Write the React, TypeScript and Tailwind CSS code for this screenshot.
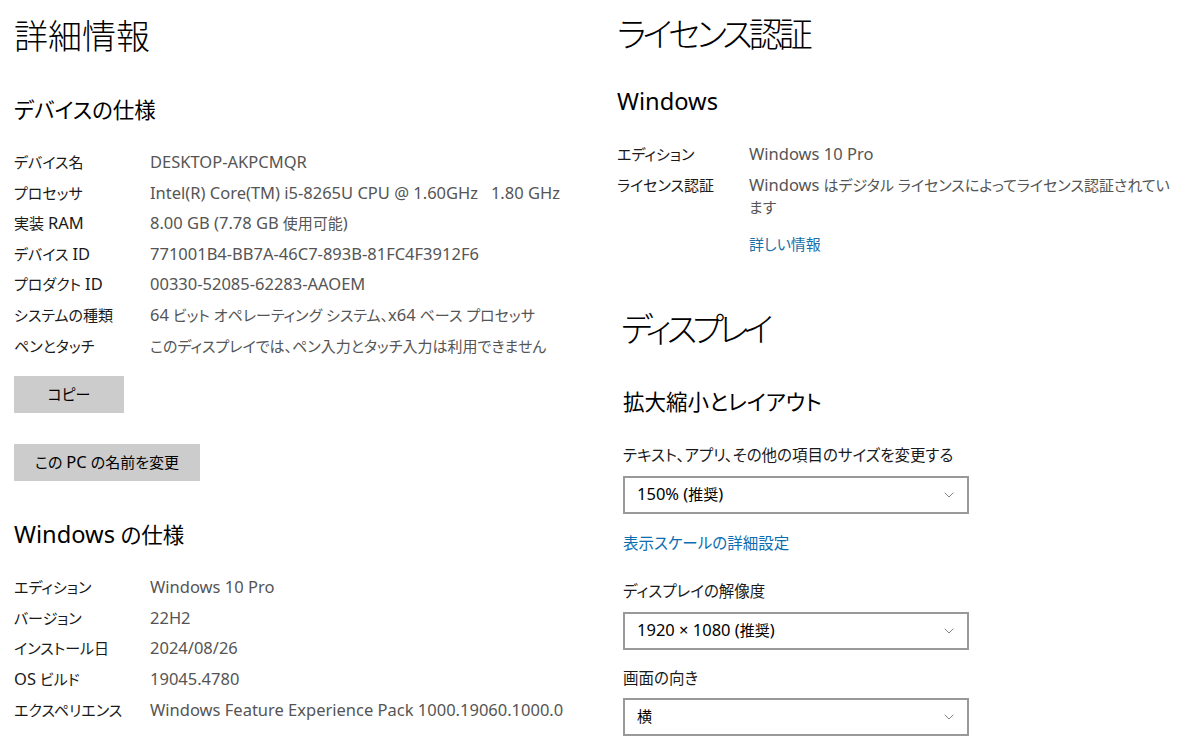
import { ChevronDown } from 'lucide-react';

const font = 'font-["Segoe_UI","Noto_Sans","Noto_Sans_CJK_JP",sans-serif] [font-feature-settings:"palt"]';

const deviceSpecs: [string, string][] = [
  ['デバイス名', 'DESKTOP-AKPCMQR'],
  ['プロセッサ', 'Intel(R) Core(TM) i5-8265U CPU @ 1.60GHz   1.80 GHz'],
  ['実装 RAM', '8.00 GB (7.78 GB 使用可能)'],
  ['デバイス ID', '771001B4-BB7A-46C7-893B-81FC4F3912F6'],
  ['プロダクト ID', '00330-52085-62283-AAOEM'],
  ['システムの種類', '64 ビット オペレーティング システム、x64 ベース プロセッサ'],
  ['ペンとタッチ', 'このディスプレイでは、ペン入力とタッチ入力は利用できません'],
];

const windowsSpecs: [string, string][] = [
  ['エディション', 'Windows 10 Pro'],
  ['バージョン', '22H2'],
  ['インストール日', '2024/08/26'],
  ['OS ビルド', '19045.4780'],
  ['エクスペリエンス', 'Windows Feature Experience Pack 1000.19060.1000.0'],
];

// Latin runs render a bit larger than the CJK text, like Segoe UI next to Yu Gothic UI
function T({ text }: { text: string }) {
  const parts = text.split(/([\x21-\x7e×%](?:[\x20-\x7e×%]*[\x21-\x7e×%])?)/);
  return (
    <>
      {parts.map((p, i) =>
        i % 2 === 1 ? (
          <span key={i} className="text-[1.1em] leading-none">
            {p}
          </span>
        ) : (
          p
        ),
      )}
    </>
  );
}

export default function App() {
  return (
    <div className={`${font} w-[1200px] h-[751px] overflow-hidden bg-white text-[#1a1a1a] grid grid-cols-[603px_1fr] pl-[14px]`}>
      {/* left: about */}
      <div className="flex flex-col">
        <h1 className="mt-[16px] h-[40px] leading-[40px] text-[34px] font-light text-black">詳細情報</h1>
        <h2 className="mt-[40px] h-[28px] leading-[28px] text-[21.5px] text-black">デバイスの仕様</h2>
        <div className="mt-[23px]">
          {deviceSpecs.map(([k, v]) => (
            <Row key={k} label={k} value={v} labelWidth="w-[136px]" />
          ))}
        </div>
        <Button className="mt-[15px] w-[110px]">コピー</Button>
        <Button className="mt-[31px] w-[186px]">
          <T text="この PC の名前を変更" />
        </Button>
        <h2 className="mt-[40px] h-[28px] leading-[28px] text-[21.5px] text-black">
          <T text="Windows の仕様" />
        </h2>
        <div className="mt-[23px]">
          {windowsSpecs.map(([k, v]) => (
            <Row key={k} label={k} value={v} labelWidth="w-[136px]" />
          ))}
        </div>
      </div>

      {/* right: license + display */}
      <div className="flex flex-col">
        <h1 className="mt-[14px] h-[40px] leading-[40px] text-[34px] font-light text-black tracking-[-4px]">ライセンス認証</h1>
        <h2 className="mt-[34px] h-[28px] leading-[28px] text-[21.5px] text-black">
          <T text="Windows" />
        </h2>
        <div className="mt-[23px]">
          <Row label="エディション" value="Windows 10 Pro" labelWidth="w-[132px]" />
          <div className="flex text-[15px] leading-[22px] pt-[4px]">
            <div className="w-[132px] shrink-0">ライセンス認証</div>
            <div className="text-[#555]">
              <T text="Windows はデジタル ライセンスによってライセンス認証されてい" />
              <br />
              ます
            </div>
          </div>
          <div className="flex text-[15px] mt-[15px] leading-[22px]">
            <div className="w-[132px] shrink-0" />
            <a className="text-[#1a6fa8]">詳しい情報</a>
          </div>
        </div>

        <div className="ml-[4px] flex flex-col">
          <h1 className="mt-[54px] h-[40px] leading-[40px] text-[34px] font-light text-black tracking-[-5px]">ディスプレイ</h1>
          <h2 className="mt-[39px] ml-[2px] h-[28px] leading-[28px] text-[21.5px] text-black">拡大縮小とレイアウト</h2>
          <div className="ml-[2px] flex flex-col">
            <div className="mt-[28px] h-[22px] leading-[22px] text-[15.5px]">テキスト、アプリ、その他の項目のサイズを変更する</div>
            <Select className="mt-[10px]" value="150% (推奨)" />
            <a className="mt-[18px] h-[22px] leading-[22px] text-[15.5px] text-[#0b6db0]">表示スケールの詳細設定</a>
            <div className="mt-[26px] h-[22px] leading-[22px] text-[15.5px]">ディスプレイの解像度</div>
            <Select className="mt-[10px]" value="1920 × 1080 (推奨)" />
            <div className="mt-[17px] h-[22px] leading-[22px] text-[15.5px]">画面の向き</div>
            <Select className="mt-[9px]" value="横" />
          </div>
        </div>
      </div>
    </div>
  );
}

function Row({ label, value, labelWidth }: { label: string; value: string; labelWidth: string }) {
  return (
    <div className="flex h-[30.6px] items-center text-[15px] whitespace-pre">
      <div className={`${labelWidth} shrink-0`}>
        <T text={label} />
      </div>
      <div className="text-[#555]">
        <T text={value} />
      </div>
    </div>
  );
}

function Button({ children, className }: { children: React.ReactNode; className: string }) {
  return (
    <div className={`${className} h-[37px] bg-[#cccccc] flex items-center justify-center text-[15px] text-black`}>
      <span className="whitespace-pre">{children}</span>
    </div>
  );
}

function Select({ value, className }: { value: string; className: string }) {
  return (
    <div className={`${className} w-[346px] h-[38px] border-2 border-[#999] bg-white flex items-center justify-between pl-[12px] pr-[10px] text-[15px] text-black`}>
      <span>
        <T text={value} />
      </span>
      <ChevronDown size={16} strokeWidth={1.2} className="text-[#666]" />
    </div>
  );
}
